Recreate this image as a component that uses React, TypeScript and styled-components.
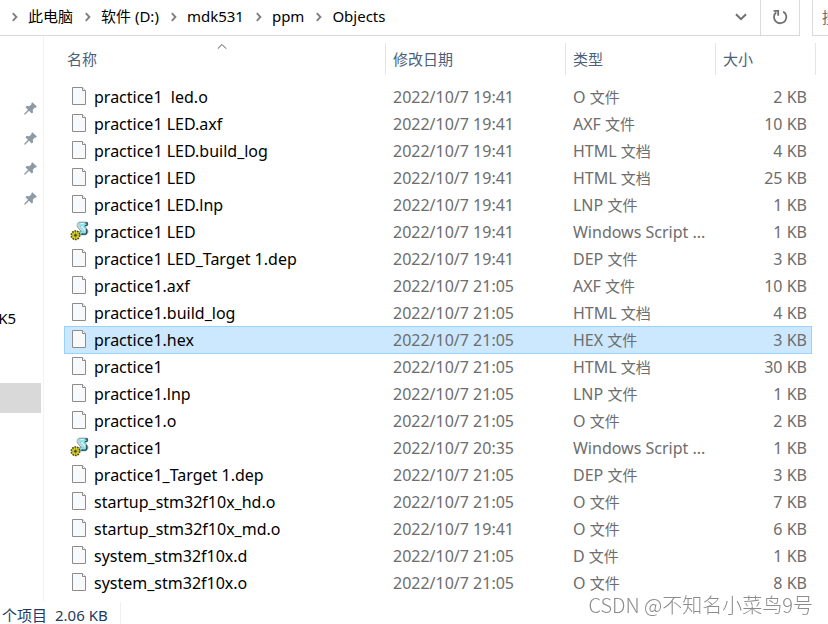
import React from 'react';
import styled, { createGlobalStyle, css } from 'styled-components';

const GlobalStyle = createGlobalStyle`
  * { box-sizing: border-box; }
  body {
    margin: 0;
    overflow: hidden;
    background: #fff;
    color: #000;
    font: 15px/27px "Noto Sans", "Noto Sans CJK SC", sans-serif;
  }
  button, input { font: inherit; color: inherit; }
`;

const plainButton = css`
  border: 0;
  padding: 0;
  background: none;
  cursor: default;
`;

const Window = styled.div`
  display: flex;
  flex-direction: column;
  height: 100vh;
`;

const TopBar = styled.header`
  display: flex;
  flex: none;
  gap: 12px;
  height: 36px;
`;

const AddressBar = styled.div`
  display: flex;
  flex: 1;
  min-width: 0;
  border: solid #d9d9d9;
  border-width: 0 1px 1px 0;
`;

const Breadcrumbs = styled.nav`
  display: flex;
  flex: 1;
  align-items: center;
  padding: 0 0 2px 11px;
  white-space: nowrap;
`;

const Crumb = styled.button`
  ${plainButton}
  margin-right: 11px;
`;

const CrumbArrow = styled.svg`
  flex: none;
  width: 8px;
  height: 10px;
  margin-right: 9px;
`;

const BarButton = styled.button<{ $divided?: boolean }>`
  ${plainButton}
  display: flex;
  align-items: center;
  justify-content: center;
  width: 39px;
  padding-bottom: 1px;
  border-left: 1px solid ${(p) => (p.$divided ? '#d9d9d9' : 'transparent')};
`;

const SearchBox = styled.label`
  flex: 0 0 16px;
  overflow: hidden;
  border: solid #d9d9d9;
  border-width: 0 0 1px 1px;
`;

const SearchInput = styled.input`
  width: 200px;
  height: 33px;
  padding: 0 0 0 9px;
  border: 0;
  outline: 0;
  &::placeholder { color: #6d6d6d; opacity: 1; }
`;

const Body = styled.div`
  display: flex;
  flex: none;
`;

const Sidebar = styled.nav`
  flex: 0 0 44px;
  padding-top: 57px;
  overflow: hidden;
  border-right: 1px solid #f3f3f3;
`;

const NavGroup = styled.div`
  margin-bottom: 20px;
`;

const NavItem = styled.button<{ $selected?: boolean }>`
  ${plainButton}
  display: flex;
  align-items: center;
  justify-content: flex-end;
  width: 41px;
  height: 30px;
  padding-right: 4px;
  background: ${(p) => (p.$selected ? '#d9d9d9' : 'transparent')};
`;

const NavLabel = styled.span`
  margin-right: 21px;
`;

const Content = styled.main`
  flex: 1;
  min-width: 0;
  padding: 7px 12px 6px 20px;
`;

const Table = styled.table`
  width: 100%;
  table-layout: fixed;
  border-collapse: separate;
  border-spacing: 0;
`;

const Column = styled.col<{ $width?: number }>`
  width: ${(p) => (p.$width ? p.$width + 'px' : 'auto')};
`;

const HeadCell = styled.th`
  padding: 0 0 8px;
  font-weight: 400;
  text-align: left;
`;

const SortButton = styled.button<{ $first?: boolean }>`
  ${plainButton}
  position: relative;
  display: block;
  width: 100%;
  height: 32px;
  padding-left: ${(p) => (p.$first ? 3 : 7)}px;
  border-right: 1px solid #e5e5e5;
  text-align: left;
  color: #4c607a;
`;

const SortArrow = styled.svg`
  position: absolute;
  top: 0;
  right: 5px;
  left: 0;
  width: 10px;
  height: 7px;
  margin: 0 auto;
`;

const Cell = styled.td<{ $align?: string }>`
  height: 27px;
  padding: 0 5px 0 7px;
  border-top: 1px solid transparent;
  font-size: 16px;
  line-height: 26px;
  white-space: nowrap;
  text-align: ${(p) => p.$align || 'left'};
  color: #6d6d6d;
`;

const NameCell = styled(Cell)`
  padding-left: 5px;
  border-left: 1px solid transparent;
  color: #000;
`;

const Hanzi = styled.span`
  font-size: 15px;
`;

const Gutter = styled.td`
  padding: 0;
`;

const FileRow = styled.tr<{ $selected?: boolean }>`
  ${(p) =>
    p.$selected &&
    css`
      ${Cell} {
        background: #cce8ff;
        border-color: #99d1ff;
        box-shadow: 0 1px 0 #99d1ff;
      }
      ${Cell}:nth-child(4) {
        border-right: 1px solid #99d1ff;
        padding-right: 4px;
      }
    `}
`;

const FileName = styled.span`
  display: flex;
  align-items: center;
  gap: 5px;
  height: 26px;
  white-space: pre;
`;

const FileIcon = styled.svg`
  flex: none;
  width: 19px;
  height: 20px;
  margin-bottom: 2px;
`;

const StatusBar = styled.footer`
  display: flex;
  flex: none;
  gap: 8px;
  padding-left: 2px;
  line-height: 26px;
  white-space: nowrap;
  color: #1e395b;
`;

const StatusSize = styled.span`
  padding-right: 12px;
  border-right: 1px solid #f0f0f0;
`;

const Watermark = styled.div`
  position: fixed;
  right: 15px;
  bottom: 5px;
  font: 300 20px/28px "Noto Sans CJK SC", sans-serif;
  color: #8c8c8c;
`;

const Chevron = () => (
  <CrumbArrow viewBox="0 0 8 10" fill="none" stroke="#7f7f7f" strokeWidth="1.9">
    <path d="M1.8 1.2 5.4 5 1.8 8.8" />
  </CrumbArrow>
);

const PageIcon = () => (
  <FileIcon viewBox="0 0 19 20">
    <path d="M2.5 1.5h10l3 3v14h-13z" fill="#f8f9fa" stroke="#8c8c8c" />
    <path d="M12.5 1.5v3h3" fill="#fff" stroke="#8c8c8c" />
  </FileIcon>
);

const ScriptIcon = () => (
  <FileIcon viewBox="0 0 19 20">
    <path
      d="M9.2 1.2h6.6c1.6.2 2.3 1.3 1.9 2.5-.3.9-1 1.3-2 1.3h-1.2l2.7 3.4c1.2 1.8.8 4-.8 5-.6.4-1.2.4-2 .4H9.6c-1.2-.5-1.2-2.6.2-3.2h1.5L8 6.6C6.4 4.6 7 2 9.2 1.2z"
      fill="#86dfe8"
      stroke="#7b8f93"
      strokeWidth=".9"
    />
    <path d="M8.4 2.6c-.7 1.4 0 2.8 1.2 4l3 3.4" fill="none" stroke="#c9d6d8" strokeWidth="1.6" />
    <path d="M10.4 2.6h3.4M11.8 5.2l3.2 4.4" fill="none" stroke="#d8fbff" strokeWidth="1.4" />
    <path d="M15.4 1.8h1.8v2.2l-2 .8M16.2 8.4c1.2 1.8.8 3.8-1 4.8h-4" fill="none" stroke="#24454b" strokeWidth="1.2" />
    <circle cx="5.5" cy="14.2" r="4.2" fill="#e3db3a" stroke="#514e10" strokeWidth="1.6" strokeDasharray="1.8 .8" />
    <path d="M5.5 11v6.4M2.3 14.2h6.4M3.3 12l4.4 4.4M7.7 12l-4.4 4.4" stroke="#8b851a" strokeWidth=".7" />
    <circle cx="5.5" cy="14.2" r="1.2" fill="#4c490d" />
  </FileIcon>
);

const PinIcon = () => (
  <svg width="13" height="13" viewBox="0 0 13 13" fill="#8d99a3">
    <path d="M8.3.2 12.8 4.6 11.8 5.7 10.8 5.5 8.8 7.7 9 10.4 7.8 11.5 5 8.8 1.3 12.5.2 12.7.4 11.6 4 7.8 1.5 5.3 2.6 4.1 5.3 4.3 7.5 2.2 7.3 1.2z" />
  </svg>
);

const TypeLabel = ({ text }: { text: string }) => {
  const [, latin, hanzi] = text.match(/^([\x20-\x7e]*)(.*)$/)!;
  return (
    <>
      {latin}
      {hanzi && <Hanzi>{hanzi}</Hanzi>}
    </>
  );
};

const crumbs = ['此电脑', '软件 (D:)', 'mdk531', 'ppm', 'Objects'];

type FileEntry = [name: string, modified: string, type: string, size: string, script?: boolean];

const files: FileEntry[] = [
  ['practice1  led.o', '2022/10/7 19:41', 'O 文件', '2 KB'],
  ['practice1 LED.axf', '2022/10/7 19:41', 'AXF 文件', '10 KB'],
  ['practice1 LED.build_log', '2022/10/7 19:41', 'HTML 文档', '4 KB'],
  ['practice1 LED', '2022/10/7 19:41', 'HTML 文档', '25 KB'],
  ['practice1 LED.lnp', '2022/10/7 19:41', 'LNP 文件', '1 KB'],
  ['practice1 LED', '2022/10/7 19:41', 'Windows Script ...', '1 KB', true],
  ['practice1 LED_Target 1.dep', '2022/10/7 19:41', 'DEP 文件', '3 KB'],
  ['practice1.axf', '2022/10/7 21:05', 'AXF 文件', '10 KB'],
  ['practice1.build_log', '2022/10/7 21:05', 'HTML 文档', '4 KB'],
  ['practice1.hex', '2022/10/7 21:05', 'HEX 文件', '3 KB'],
  ['practice1', '2022/10/7 21:05', 'HTML 文档', '30 KB'],
  ['practice1.lnp', '2022/10/7 21:05', 'LNP 文件', '1 KB'],
  ['practice1.o', '2022/10/7 21:05', 'O 文件', '2 KB'],
  ['practice1', '2022/10/7 20:35', 'Windows Script ...', '1 KB', true],
  ['practice1_Target 1.dep', '2022/10/7 21:05', 'DEP 文件', '3 KB'],
  ['startup_stm32f10x_hd.o', '2022/10/7 21:05', 'O 文件', '7 KB'],
  ['startup_stm32f10x_md.o', '2022/10/7 19:41', 'O 文件', '6 KB'],
  ['system_stm32f10x.d', '2022/10/7 21:05', 'D 文件', '1 KB'],
  ['system_stm32f10x.o', '2022/10/7 21:05', 'O 文件', '8 KB'],
];

export default function App() {
  return (
    <Window>
      <GlobalStyle />
      <TopBar>
        <AddressBar>
          <Breadcrumbs>
            {crumbs.map((name) => (
              <React.Fragment key={name}>
                <Chevron />
                <Crumb>{name}</Crumb>
              </React.Fragment>
            ))}
          </Breadcrumbs>
          <BarButton aria-label="Recent locations">
            <svg width="12" height="8" viewBox="0 0 12 8" fill="none" stroke="#707070" strokeWidth="2">
              <path d="M1 1.2 6 6.2 11 1.2" />
            </svg>
          </BarButton>
          <BarButton $divided aria-label="Refresh">
            <svg width="16" height="16" viewBox="0 0 16 16" fill="none" stroke="#707070" strokeWidth="1.8">
              <path d="M11.2 2.6A6.2 6.2 0 1 1 4.2 3.3" />
              <path d="M1.6 1.9h4.6v4.8" />
            </svg>
          </BarButton>
        </AddressBar>
        <SearchBox>
          <SearchInput aria-label="搜索" placeholder="搜索" />
        </SearchBox>
      </TopBar>
      <Body>
        <Sidebar>
          <NavGroup>
            {[1, 2, 3, 4].map((n) => (
              <NavItem key={n} aria-label={`Pinned folder ${n}`}>
                <PinIcon />
              </NavItem>
            ))}
            <NavItem aria-label="Folder 1" />
            <NavItem aria-label="Folder 2" />
            <NavItem aria-label="Folder 3" />
            <NavItem>
              <NavLabel>K5</NavLabel>
            </NavItem>
            <NavItem aria-label="Folder 4" />
          </NavGroup>
          <NavItem $selected aria-label="Current location" />
        </Sidebar>
        <Content>
          <Table>
            <colgroup>
              <Column />
              <Column $width={180} />
              <Column $width={150} />
              <Column $width={96} />
              <Column $width={4} />
            </colgroup>
            <thead>
              <tr>
                <HeadCell>
                  <SortButton $first>
                    名称
                    <SortArrow viewBox="0 0 10 7" fill="none" stroke="#555">
                      <path d="M.8 5.7 5 1.5 9.2 5.7" />
                    </SortArrow>
                  </SortButton>
                </HeadCell>
                <HeadCell>
                  <SortButton>修改日期</SortButton>
                </HeadCell>
                <HeadCell>
                  <SortButton>类型</SortButton>
                </HeadCell>
                <HeadCell colSpan={2}>
                  <SortButton>大小</SortButton>
                </HeadCell>
              </tr>
            </thead>
            <tbody>
              {files.map(([name, modified, type, size, script], i) => (
                <FileRow key={i} $selected={name === 'practice1.hex'}>
                  <NameCell>
                    <FileName>
                      {script ? <ScriptIcon /> : <PageIcon />}
                      {name}
                    </FileName>
                  </NameCell>
                  <Cell>{modified}</Cell>
                  <Cell>
                    <TypeLabel text={type} />
                  </Cell>
                  <Cell $align="right">{size}</Cell>
                  <Gutter />
                </FileRow>
              ))}
            </tbody>
          </Table>
        </Content>
      </Body>
      <StatusBar>
        <span>个项目</span>
        <StatusSize>2.06 KB</StatusSize>
      </StatusBar>
      <Watermark>CSDN @不知名小菜鸟9号</Watermark>
    </Window>
  );
}
